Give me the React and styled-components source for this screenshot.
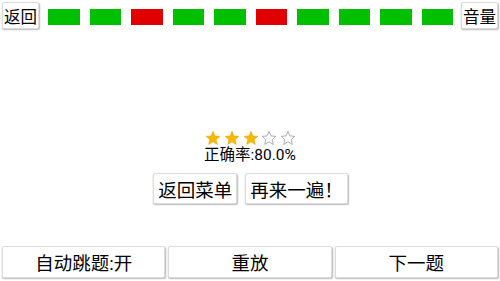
import React from "react";
import styled, { createGlobalStyle } from "styled-components";

const Global = createGlobalStyle`
  html, body { margin: 0; padding: 0; background: #fff; }
  body { font-family: "Roboto", "Noto Sans CJK SC", sans-serif; }
  #root { width: 500px; height: 281px; }
`;

const Screen = styled.div`
  width: 500px;
  height: 281px;
  display: flex;
  flex-direction: column;
  background: #fff;
  box-sizing: border-box;
`;

const TopBar = styled.div`
  display: flex;
  align-items: center;
  padding: 2px 2px 0 2px;
  height: 29px;
  box-sizing: border-box;
`;

const Button = styled.button`
  background: #fff;
  border: 1px solid #dcdcdc;
  border-radius: 2px;
  box-shadow: 0.5px 1px 1.5px rgba(0, 0, 0, 0.28);
  color: #000;
  font-family: "Roboto", "Noto Sans CJK SC", sans-serif;
  font-size: 18px;
  padding: 0;
  margin: 0;
  display: flex;
  align-items: center;
  justify-content: center;
  box-sizing: border-box;
  cursor: pointer;
`;

const SmallButton = styled(Button)`
  width: 37px;
  height: 27px;
  font-size: 16.5px;
  flex-shrink: 0;
`;

const Bars = styled.div`
  flex: 1;
  display: flex;
  gap: 10px;
  padding: 0 8px 0 9px;
  align-items: center;
`;

const Bar = styled.div`
  flex: 1;
  height: 16px;
  background: ${(p) => (p.$ok ? "#00c000" : "#e00000")};
  margin-top: 3px;
`;

const Main = styled.div`
  flex: 1;
  display: flex;
  flex-direction: column;
  align-items: center;
  justify-content: flex-end;
  padding-bottom: 42px;
`;

const Stars = styled.div`
  display: flex;
  gap: 2.7px;
  height: 16px;
  align-items: center;
  margin-left: 1px;
`;

const Score = styled.div`
  font-size: 15.5px;
  color: #000;
  line-height: 19px;
`;

const Actions = styled.div`
  display: flex;
  gap: 8px;
  margin-top: 8px;
  margin-left: 1px;
`;

const ActionButton = styled(Button)`
  height: 31px;
  padding: 0 4px;
  font-size: 18.5px;
`;

const BottomBar = styled.div`
  display: flex;
  gap: 3px;
  padding: 0 2px 3px 2px;
`;

const BottomButton = styled(Button)`
  flex: 1;
  height: 32px;
  font-size: 18.5px;
`;

const Star = ({ filled }) => (
  <svg width="16" height="16" viewBox="0 0 24 24">
    <polygon
      points="12,2 14.9,8.9 22.3,9.5 16.7,14.4 18.4,21.6 12,17.8 5.6,21.6 7.3,14.4 1.7,9.5 9.1,8.9"
      fill={filled ? "#f8b800" : "none"}
      stroke={filled ? "#e0a000" : "#a8a8a8"}
      strokeWidth={filled ? 0.8 : 1.4}
      strokeLinejoin="round"
    />
  </svg>
);

const results = [true, true, false, true, true, false, true, true, true, true];

export default function App() {
  return (
    <>
      <Global />
      <Screen>
        <TopBar>
          <SmallButton>返回</SmallButton>
          <Bars>
            {results.map((ok, i) => (
              <Bar key={i} $ok={ok} />
            ))}
          </Bars>
          <SmallButton>音量</SmallButton>
        </TopBar>
        <Main>
          <Stars>
            {[1, 2, 3, 4, 5].map((n) => (
              <Star key={n} filled={n <= 3} />
            ))}
          </Stars>
          <Score>正确率:80.0%</Score>
          <Actions>
            <ActionButton>返回菜单</ActionButton>
            <ActionButton>再来一遍！</ActionButton>
          </Actions>
        </Main>
        <BottomBar>
          <BottomButton>自动跳题:开</BottomButton>
          <BottomButton>重放</BottomButton>
          <BottomButton>下一题</BottomButton>
        </BottomBar>
      </Screen>
    </>
  );
}
